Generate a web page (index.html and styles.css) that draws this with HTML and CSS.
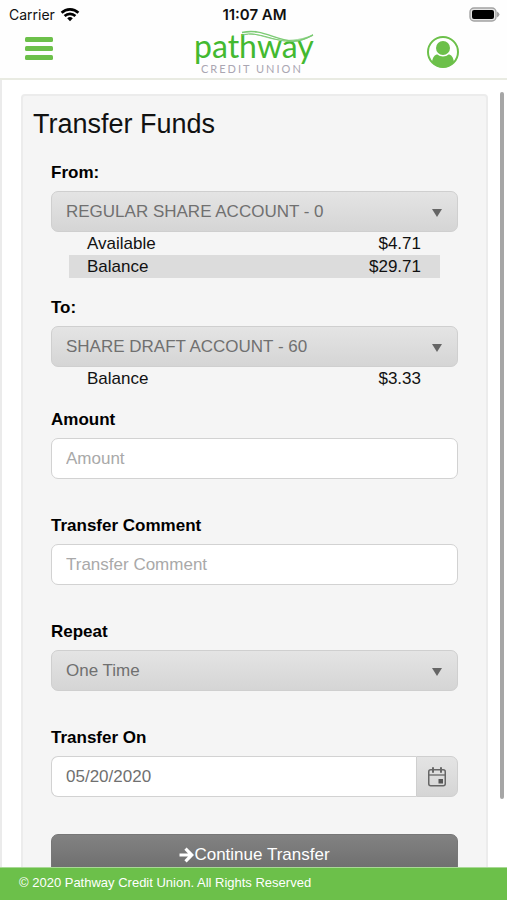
FILE: index.html
```html
<!DOCTYPE html>
<html lang="en">
<head>
  <meta charset="utf-8">
  <meta name="viewport" content="width=device-width, initial-scale=1">
  <title>Transfer Funds</title>
  <link rel="stylesheet" href="styles.css">
</head>
<body>
  <header class="header">
    <div class="status">
      <div class="carrier">
        <span>Carrier</span>
        <svg width="20" height="15" viewBox="0 0 20 15" fill="none" stroke="#000" stroke-width="2.6" aria-hidden="true">
          <path d="M1.6 5.8a12 12 0 0 1 16.8 0M4.6 9a7.8 7.8 0 0 1 10.8 0"/>
          <path d="M10 14.2 7.2 11.3a4 4 0 0 1 5.6 0z" fill="#000" stroke="none"/>
        </svg>
      </div>
      <span class="time">11:07 AM</span>
      <svg class="battery" width="31" height="15" viewBox="0 0 31 15" aria-hidden="true">
        <rect x="1" y="1" width="26" height="13" rx="4" fill="#e4e4e4" stroke="#a3a3a3" stroke-width="1.4"/>
        <rect x="3" y="3" width="22" height="9" rx="2" fill="#000"/>
        <path d="M28 4.500q2.500 1.500 2.500 3t-2.500 3z" fill="#a3a3a3"/>
      </svg>
    </div>
    <div class="bar">
      <button class="icon-button menu" type="button" aria-label="Menu">
        <svg width="28" height="24" viewBox="0 0 28 24" fill="#6cc04a" aria-hidden="true">
          <rect width="28" height="5" rx="1.500"/>
          <rect y="9" width="28" height="5" rx="1.500"/>
          <rect y="18" width="28" height="5" rx="1.500"/>
        </svg>
      </button>
      <svg class="logo" width="120" height="46" viewBox="0 0 120 46" role="img" aria-label="Pathway Credit Union">
        <text class="logo-name" x="0" y="30">pathway</text>
        <text class="logo-sub" x="7" y="45">CREDIT UNION</text>
        <g fill="none" stroke="#7ccb74">
          <path d="M48 4.500C68 0 80 12 99 13 108 13 113 10 119 7" stroke-width="1.500"/>
          <path d="M48 7C66 3 80 14 98 13.500 108 13 113 10 119 7" stroke-width="1"/>
          <path d="M48 4.500C62 5 72 10 82 11.500S105 13 119 7" stroke-width="1" opacity=".7"/>
        </g>
      </svg>
      <button class="icon-button profile" type="button" aria-label="Profile">
        <svg width="32" height="34" viewBox="0 0 32 34" aria-hidden="true">
          <circle cx="16" cy="17" r="15" fill="#fff" stroke="#6cc04a" stroke-width="2"/>
          <circle cx="16" cy="13" r="7" fill="#6cc04a"/>
          <path d="M5 27.500C5.500 22 8 19.500 10.500 19.500 13 22 19 22 21.500 19.500 24 19.500 26.500 22 27 27.500 21 34.300 11 34.300 5 27.500z" fill="#6cc04a"/>
        </svg>
      </button>
    </div>
  </header>

  <main class="content">
    <form class="card">
      <h1 class="title">Transfer Funds</h1>

      <section class="account">
        <label class="label" for="from">From:</label>
        <div class="select">
          <select class="field" id="from"><option>REGULAR SHARE ACCOUNT - 0</option></select>
        </div>
        <dl class="amounts">
          <div class="amount"><dt>Available</dt><dd>$4.71</dd></div>
          <div class="amount shaded"><dt>Balance</dt><dd>$29.71</dd></div>
        </dl>
      </section>

      <section class="account">
        <label class="label" for="to">To:</label>
        <div class="select">
          <select class="field" id="to"><option>SHARE DRAFT ACCOUNT - 60</option></select>
        </div>
        <dl class="amounts">
          <div class="amount"><dt>Balance</dt><dd>$3.33</dd></div>
        </dl>
      </section>

      <div class="group">
        <label class="label" for="amount">Amount</label>
        <input class="field" id="amount" type="text" placeholder="Amount">
      </div>
      <div class="group">
        <label class="label" for="comment">Transfer Comment</label>
        <input class="field" id="comment" type="text" placeholder="Transfer Comment">
      </div>
      <div class="group">
        <label class="label" for="repeat">Repeat</label>
        <div class="select">
          <select class="field" id="repeat"><option>One Time</option></select>
        </div>
      </div>
      <div class="group">
        <label class="label" for="date">Transfer On</label>
        <div class="date">
          <input class="field" id="date" type="text" value="05/20/2020">
          <button class="calendar" type="button" aria-label="Choose date">
            <svg width="18" height="20" viewBox="0 0 18 20" fill="none" stroke="#666" aria-hidden="true">
              <rect x="0.750" y="2.750" width="16.500" height="16" rx="2" stroke-width="1.500"/>
              <path d="M1 8h16" stroke-width="1.300"/>
              <path d="M5 1v4M13 1v4" stroke-width="2" stroke-linecap="round"/>
              <rect x="10.500" y="12" width="4.500" height="4.500" fill="#555" stroke="none"/>
            </svg>
          </button>
        </div>
      </div>

      <button class="submit" type="submit">
        <svg width="15" height="16" viewBox="0 0 15 16" fill="none" stroke="#fff" stroke-width="3.200" aria-hidden="true">
          <path d="M0.500 8h12M6.500 1.700 12.800 8l-6.300 6.300"/>
        </svg>
        <span>Continue Transfer</span>
      </button>
    </form>
    <div class="scrollbar"></div>
  </main>

  <footer class="footer">© 2020 Pathway Credit Union. All Rights Reserved</footer>
</body>
</html>
```
FILE: styles.css
```css
* {
  box-sizing: border-box;
}

body {
  display: flex;
  flex-direction: column;
  height: 100vh;
  margin: 0;
  overflow: hidden;
  background: #fff;
  color: #111;
  font-family: "Liberation Sans", Arial, sans-serif;
  font-size: 17px;
}

.header {
  flex: none;
  background: #fefefe;
  border-bottom: 2px solid #e9ebe2;
}

.status {
  display: grid;
  grid-template-columns: 1fr auto 1fr;
  align-items: center;
  height: 28px;
  padding: 0 7px 0 9px;
  font-family: Inter, sans-serif;
  font-size: 14px;
}

.carrier {
  display: flex;
  align-items: center;
  gap: 5px;
}

.time {
  font-size: 15px;
  font-weight: 600;
}

.battery {
  justify-self: end;
}

.bar {
  display: grid;
  grid-template-columns: 1fr auto 1fr;
  align-items: start;
  height: 50px;
}

.icon-button {
  display: block;
  padding: 0;
  border: 0;
  background: none;
}

.menu {
  justify-self: start;
  margin: 9px 0 0 25px;
}

.profile {
  justify-self: end;
  margin: 7px 48px 0 0;
}

.logo {
  display: block;
  overflow: visible;
}

.logo-name {
  fill: #43b930;
  font-family: Lato, sans-serif;
  font-size: 32px;
}

.logo-sub {
  fill: #aaa6b2;
  font-family: Lato, sans-serif;
  font-size: 11px;
  letter-spacing: 2px;
}

.content {
  position: relative;
  flex: 1;
  min-height: 0;
  overflow: hidden;
  padding: 14px 19px 0 19px;
  border-left: 2px solid #ebebeb;
}

.card {
  padding: 12px 28px 24px;
  border: 2px solid #ececec;
  border-radius: 4px;
  background: #f5f5f5;
}

.title {
  margin: 0 0 23px -18px;
  color: #111;
  font-size: 27px;
  font-weight: 400;
  line-height: 32px;
}

.account {
  margin-bottom: 20px;
}

.group {
  margin-bottom: 37px;
}

.label {
  display: block;
  margin-bottom: 8px;
  color: #000;
  font-weight: 700;
  line-height: 20px;
}

.field {
  display: block;
  width: 100%;
  height: 41px;
  margin: 0;
  padding: 0 14px;
  border: 1px solid #d2d2d2;
  border-radius: 7px;
  background: #fff;
  color: #707070;
  font: inherit;
}

.field::placeholder {
  color: #a9a9a9;
  opacity: 1;
}

.select {
  position: relative;
}

.select .field {
  appearance: none;
  border-color: #cfcfcf;
  background: linear-gradient(#e4e4e4, #d5d5d5);
}

.select::after {
  position: absolute;
  top: 18px;
  right: 16px;
  border: 5px solid transparent;
  border-top: 8px solid #666;
  border-bottom: 0;
  content: "";
  pointer-events: none;
}

.amounts {
  margin: 0 18px;
}

.amount {
  display: flex;
  justify-content: space-between;
  padding: 0 19px 0 18px;
  line-height: 23px;
}

.amount dd {
  margin: 0;
}

.shaded {
  background: #dcdcdc;
}

.date {
  display: flex;
}

.date .field {
  flex: 1;
  min-width: 0;
  border-right: 0;
  border-radius: 7px 0 0 7px;
}

.calendar {
  display: flex;
  align-items: center;
  justify-content: center;
  width: 42px;
  padding: 0;
  border: 1px solid #cfcfcf;
  border-radius: 0 7px 7px 0;
  background: linear-gradient(#e4e4e4, #d5d5d5);
}

.submit {
  display: flex;
  align-items: center;
  justify-content: center;
  width: 100%;
  height: 41px;
  margin: 0;
  padding: 0;
  border: 1px solid #777;
  border-radius: 7px;
  background: linear-gradient(#828282, #6c6c6c);
  color: #fff;
  font: inherit;
}

.scrollbar {
  position: absolute;
  top: 12px;
  right: 3px;
  bottom: 68px;
  width: 4px;
  border-radius: 2px;
  background: #a6a6a6;
}

.footer {
  flex: none;
  padding: 0 19px 2px;
  border-top: 1px solid #a9d996;
  background: #6cc04a;
  color: #fff;
  font-size: 13px;
  line-height: 30px;
}
```
